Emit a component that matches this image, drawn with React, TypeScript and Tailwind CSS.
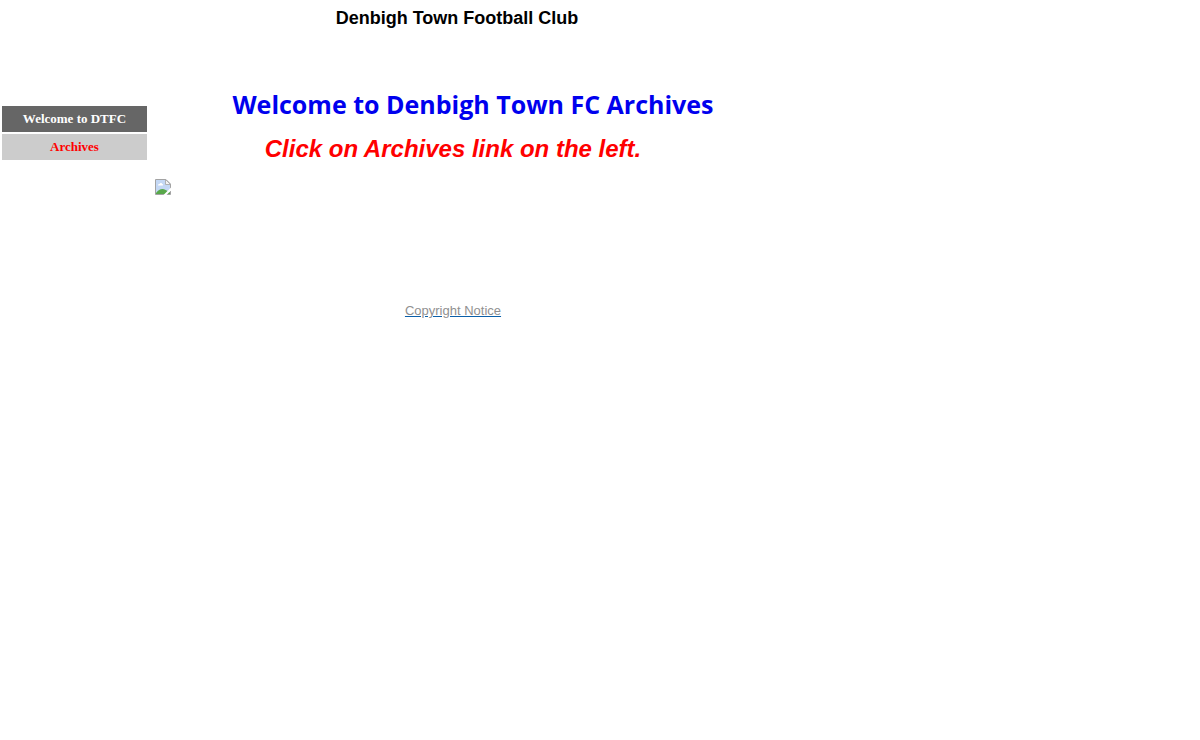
const navItems = [
  { label: 'Welcome to DTFC', href: '#welcome', className: 'bg-[#666666] text-white' },
  { label: 'Archives', href: '#archives', className: 'bg-[#cccccc] text-[#ff0000]' },
];

const BrokenImage = () => (
  <svg className="h-4 w-4" viewBox="0 0 16 16" role="img" aria-label="Image">
    <path d="M0.500 0.500H11L15.500 5V15.500H0.500Z" fill="#c4d8f5" stroke="#a3a3a3" />
    <path d="M10.500 0.500V5.500H15.500Z" fill="#f4f4f4" stroke="#a3a3a3" strokeWidth="0.800" />
    <path d="M3 6.500c0-1.200 0.800-1.500 1.500-1.500 0.500-1.500 2.500-1.200 2.700 0 1.200 0 1.200 1.500 0.300 1.500Z" fill="#ffffff" />
    <path d="M1 15v-1c2-2.500 4-4 6.500-4 2 0 4 1.500 7.500 3.500v1.500Z" fill="#58a84a" />
    <path d="M8.500 16L16 8.500V11.500L11.500 16Z" fill="#ffffff" />
  </svg>
);

const App = () => {
  return (
    <div className="bg-white font-['Liberation_Sans',Arial,sans-serif]">
      <header className="w-full max-w-[914px] pt-2">
        <h1 className="text-center text-lg leading-5 font-bold text-black">Denbigh Town Football Club</h1>
      </header>

      <div className="flex pt-14">
        <nav className="flex w-[149px] shrink-0 flex-col gap-0.5 px-0.5 pt-[22px]">
          {navItems.map((item) => (
            <a
              key={item.label}
              href={item.href}
              className={`py-1 text-center font-['Liberation_Serif',serif] text-[13px] leading-[18px] font-bold ${item.className}`}
            >
              {item.label}
            </a>
          ))}
        </nav>

        <main className="w-full max-w-[608px] pt-1">
          <h2 className="pl-10 text-center font-['Open_Sans',sans-serif] text-[25px] leading-8 font-bold text-[#0000ee]">
            Welcome to Denbigh Town FC Archives
          </h2>
          <p className="pt-3 text-center text-2xl leading-[34px] font-bold text-[#ff0000] italic">
            Click on Archives link on the left.
          </p>
          <div className="px-1.5 pt-[13px]">
            <BrokenImage />
          </div>
          <footer className="pt-27 text-center text-[13px] leading-4">
            <a href="#copyright" className="text-[#909090] underline decoration-[#0b5fa8]">
              Copyright Notice
            </a>
          </footer>
        </main>
      </div>
    </div>
  );
};

export default App;
